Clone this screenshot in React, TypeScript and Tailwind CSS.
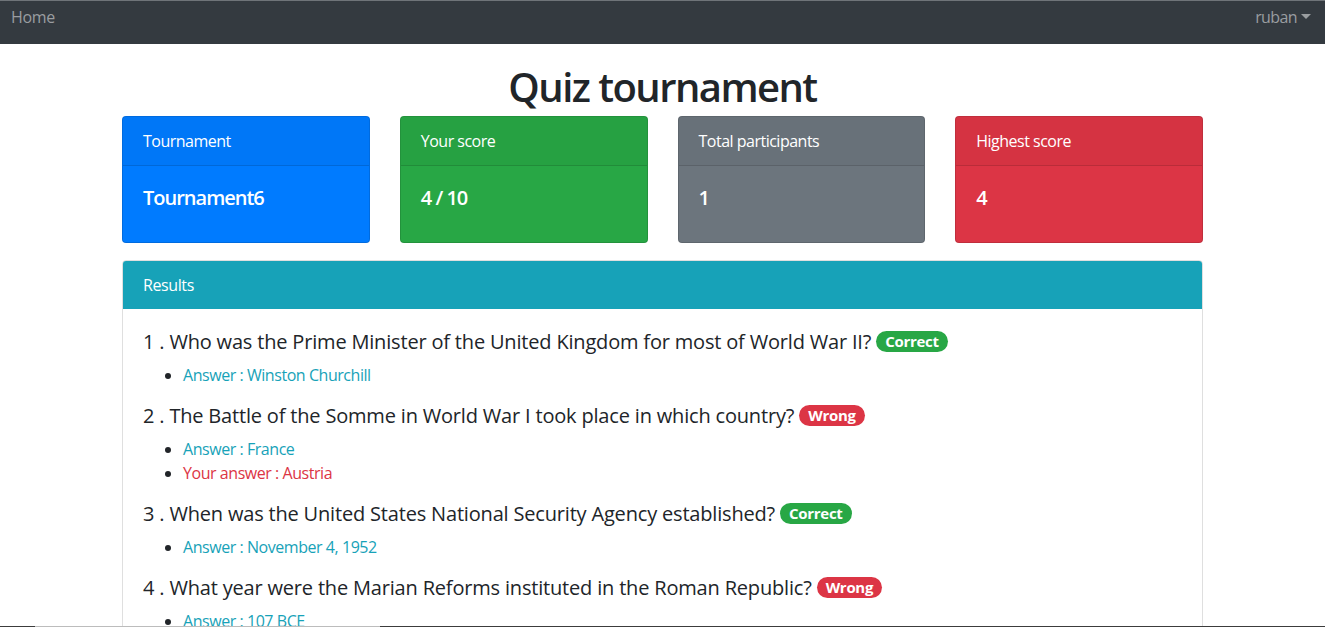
const stats = [
  { label: 'Tournament', value: 'Tournament6', bg: 'bg-[#007bff]' },
  { label: 'Your score', value: '4 / 10', bg: 'bg-[#28a745]' },
  { label: 'Total participants', value: '1', bg: 'bg-[#6c757d]' },
  { label: 'Highest score', value: '4', bg: 'bg-[#dc3545]' },
];

const results = [
  { q: 'Who was the Prime Minister of the United Kingdom for most of World War II?', answer: 'Winston Churchill', correct: true },
  { q: 'The Battle of the Somme in World War I took place in which country?', answer: 'France', yours: 'Austria', correct: false },
  { q: 'When was the United States National Security Agency established?', answer: 'November 4, 1952', correct: true },
  { q: 'What year were the Marian Reforms instituted in the Roman Republic?', answer: '107 BCE', yours: '88 BCE', correct: false },
];

export default function App() {
  return (
    <div className="min-h-screen bg-white text-[#212529]" style={{ fontFamily: '"Open Sans", sans-serif' }}>
      {/* Navbar */}
      <nav className="flex h-[44px] items-center justify-between border-t border-[#6f7479] bg-[#343a40] pl-[11px] pr-[14px] text-[16px] tracking-[-0.3px] text-[#9a9da0]">
        <span className="-mt-[12px]">Home</span>
        <span className="-mt-[12px] flex items-center gap-[4px]">
          <span className="tracking-[-0.6px]">ruban</span>
          <span className="h-0 w-0 border-x-[5px] border-t-[5px] border-x-transparent border-t-[#9a9da0]" />
        </span>
      </nav>

      <div className="mx-auto w-[1081px]">
        <h1 className="mb-[5px] mt-[19px] text-center text-[40px] font-semibold leading-[48px] tracking-[-1.55px]">
          Quiz tournament
        </h1>

        {/* Stat cards */}
        <div className="grid grid-cols-4 gap-[30px]">
          {stats.map((s) => (
            <div key={s.label} className={`${s.bg} overflow-hidden rounded-[4px] border border-black/[0.125] text-white`}>
              <div className="border-b border-black/[0.125] bg-black/[0.03] px-[20px] py-[12px] text-[16px] leading-[24px] tracking-[-0.5px]">
                {s.label}
              </div>
              <div className="p-[20px]">
                <h5 className="mb-[12px] text-[20px] font-semibold leading-[24px] tracking-[-1px]">{s.value}</h5>
              </div>
            </div>
          ))}
        </div>

        {/* Results */}
        <div className="mt-[17px] overflow-hidden rounded-[4px] border border-black/[0.125]">
          <div className="bg-[#17a2b8] px-[20px] py-[12px] text-[16px] leading-[24px] tracking-[-0.4px] text-white">Results</div>
          <div className="p-[20px]">
            {results.map((r, i) => (
              <div key={i}>
                <h5 className="mb-[8px] text-[20px] font-medium leading-[26px] tracking-[-0.18px]">
                  {i + 1} . {r.q}{' '}
                  <span
                    className={`${r.correct ? 'bg-[#28a745]' : 'bg-[#dc3545]'} inline-block rounded-full px-[9px] py-[3px] align-[2px] text-[15px] font-bold leading-[15px] tracking-[-0.3px] text-white`}
                  >
                    {r.correct ? 'Correct' : 'Wrong'}
                  </span>
                </h5>
                <ul className="mb-[16px] list-disc pl-[40px] text-[16px] leading-[24px] tracking-[-0.45px]">
                  <li className="text-[#17a2b8] marker:text-[#212529]">Answer : {r.answer}</li>
                  {r.yours && <li className="text-[#dc3545] marker:text-[#212529]">Your answer : {r.yours}</li>}
                </ul>
              </div>
            ))}
          </div>
        </div>
      </div>

      {/* window bottom edge */}
      <div className="pointer-events-none fixed bottom-0 left-0 flex h-px w-full">
        <div className="w-[35px] bg-[#3c3c3c]" />
        <div className="w-[345px] bg-[#bcbcbc]" />
        <div className="flex-1 bg-[#3c3c3c]" />
      </div>
    </div>
  );
}
